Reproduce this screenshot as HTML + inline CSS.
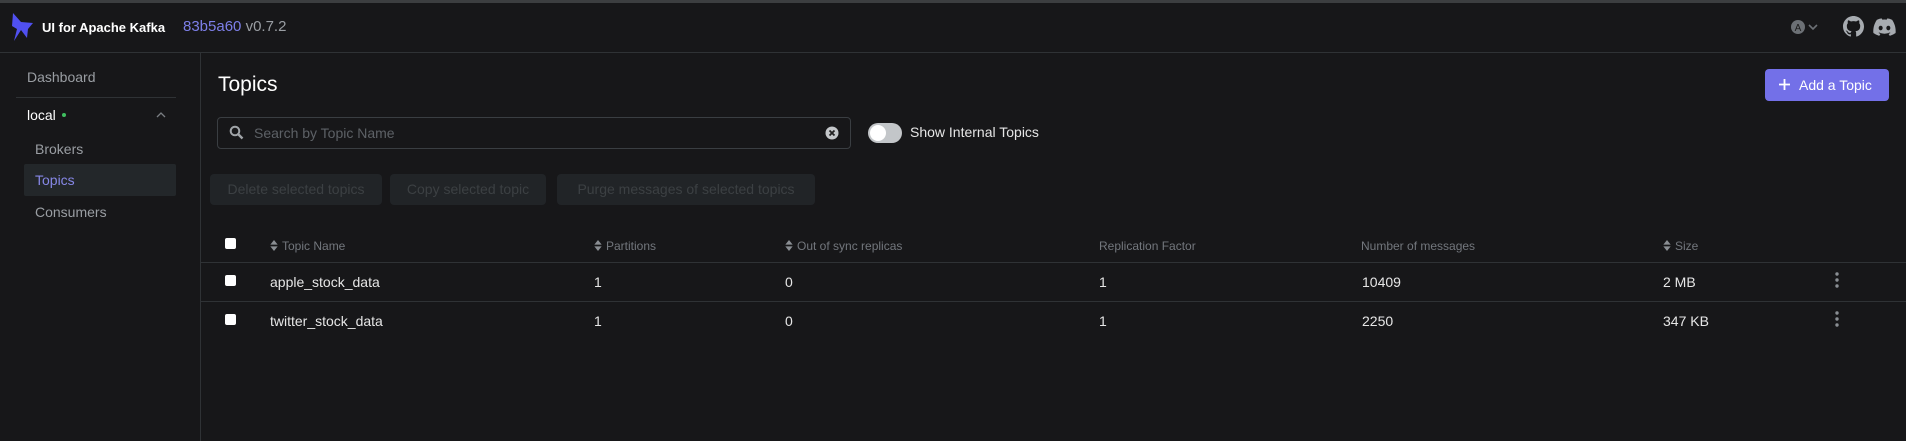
<!DOCTYPE html>
<html><head><meta charset="utf-8"><style>
*{box-sizing:border-box;margin:0;padding:0}
body{width:1906px;height:441px;background:#171719;font-family:"Liberation Sans",sans-serif;color:#e6e6e6;position:relative;overflow:hidden;font-size:14px}
.a{position:absolute;white-space:nowrap}
.g{color:#9a9ea3}
.hd{color:#73777d;font-size:12px}
.cb{position:absolute;width:11px;height:11px;background:#fff;border-radius:2px}
.btn{position:absolute;top:174px;height:31px;background:#212427;border-radius:4px;color:#3c4043;font-size:14px;line-height:31px;text-align:center;white-space:nowrap;overflow:hidden}
.sort{display:inline-block;width:8px;height:11px;vertical-align:-1px;margin-right:4px}
</style></head><body>
<div class="a" style="left:0;top:0;width:1906px;height:3px;background:#3c3e40"></div>
<div class="a" style="left:0;top:52px;width:1906px;height:1px;background:#2f3235"></div>
<div class="a" style="left:200px;top:53px;width:1px;height:388px;background:#2f3235"></div>
<svg class="a" style="left:11px;top:12px" width="24" height="31" viewBox="0 0 24 31"><path d="M2 1 L10 10 L22 11 L17 17 L16 26 L10 18 L3 29 L6 17 L1 14 Z" fill="#5050f0"/></svg>
<div class="a" style="left:42px;top:20px;font-size:13px;font-weight:bold;color:#fff">UI for Apache Kafka</div>
<div class="a" style="left:183px;top:18px;font-size:15px"><span style="color:#7d7fe8">83b5a60</span> <span class="g">v0.7.2</span></div>
<svg class="a" style="left:1790px;top:19px" width="32" height="16"><circle cx="8" cy="8" r="7" fill="#6c7075"/><text x="8" y="12" font-size="10" text-anchor="middle" fill="#1a1a1a" font-family="Liberation Sans">A</text><path d="M19 6 L23 10 L27 6" stroke="#6c7075" stroke-width="1.6" fill="none"/></svg>
<svg class="a" style="left:1843px;top:16px" width="21" height="21" viewBox="0 0 16 16"><path fill="#a7abb0" d="M8 0C3.58 0 0 3.58 0 8c0 3.54 2.29 6.53 5.47 7.590.4.07.55-.17.55-.38v-1.33c-2.23.48-2.7-1.070-2.7-1.070-.36-.92-.89-1.170-.89-1.170-.73-.5.06-.49.06-.49.8.06 1.23.83 1.23.83.72 1.22 1.87.87 2.33.66.07-.52.28-.87.51-1.07-1.78-.2-3.64-.89-3.64-3.95 0-.87.31-1.59.82-2.15-.08-.2-.36-1.02.08-2.12 0 0 .67-.21 2.2.82a7.6 7.6 0 0 1 4 0c1.53-1.04 2.2-.82 2.2-.82.44 1.1.16 1.92.08 2.12.51.56.82 1.27.82 2.15 0 3.07-1.87 3.75-3.65 3.95.29.25.54.73.54 1.48v2.2c0 .21.15.46.55.38A8 8 0 0 0 16 8c0-4.42-3.58-8-8-8z"/></svg>
<svg class="a" style="left:1873px;top:18px" width="23" height="18" viewBox="0 0 24 18"><path fill="#a7abb0" d="M20 1.5A20 20 0 0 0 15 0l-.7 1.3a18 18 0 0 0-4.6 0L9 0a20 20 0 0 0-5 1.5C.9 6.2 0 10.8.4 15.3A20 20 0 0 0 6.5 18.3l1.3-2.1a13 13 0 0 1-2-1l.5-.4a14 14 0 0 0 11.4 0l.5.4a13 13 0 0 1-2 1l1.3 2.1a20 20 0 0 0 6.1-3C24 10 22.7 5.6 20 1.5zM8 12.5c-1.2 0-2.1-1.1-2.1-2.4S6.8 7.7 8 7.7s2.2 1.1 2.1 2.4c0 1.3-.9 2.4-2.1 2.4zm8 0c-1.2 0-2.1-1.1-2.1-2.4s.9-2.4 2.1-2.4 2.2 1.1 2.1 2.4c0 1.3-.9 2.4-2.1 2.4z"/></svg>
<div class="a g" style="left:27px;top:69px;font-size:14px">Dashboard</div>
<div class="a" style="left:16px;top:97px;width:160px;height:1px;background:#2f3235"></div>
<div class="a" style="left:27px;top:107px;font-size:14px;color:#fff">local <span style="display:inline-block;width:4px;height:4px;border-radius:50%;background:#3fbf5f;vertical-align:3px;margin-left:2px"></span></div>
<svg class="a" style="left:156px;top:111px" width="10" height="7"><path d="M1 6 L5 2 L9 6" stroke="#7a7e83" stroke-width="1.3" fill="none"/></svg>
<div class="a g" style="left:35px;top:141px">Brokers</div>
<div class="a" style="left:24px;top:164px;width:152px;height:32px;background:#23272a;border-radius:2px"></div>
<div class="a" style="left:35px;top:172px;color:#8687e6">Topics</div>
<div class="a g" style="left:35px;top:204px">Consumers</div>
<div class="a" style="left:218px;top:73px;font-size:21px;color:#fff">Topics</div>
<div class="a" style="left:1765px;top:69px;width:124px;height:32px;background:#7370e8;border-radius:4px;color:#fff;font-size:14px;line-height:32px;padding-left:34px">Add a Topic</div>
<svg class="a" style="left:1778px;top:78px" width="13" height="13"><path d="M6.5 1v11M1 6.5h11" stroke="#fff" stroke-width="1.8"/></svg>
<div class="a" style="left:217px;top:117px;width:634px;height:32px;border:1px solid #3a3e42;border-radius:4px"></div>
<svg class="a" style="left:229px;top:125px" width="15" height="15"><circle cx="6" cy="6" r="4.3" stroke="#a0a4a8" stroke-width="2" fill="none"/><path d="M9 9 L13.5 13.5" stroke="#a0a4a8" stroke-width="2.4"/></svg>
<div class="a" style="left:254px;top:125px;color:#5d6166;font-size:14px">Search by Topic Name</div>
<svg class="a" style="left:825px;top:126px" width="14" height="14"><circle cx="7" cy="7" r="6.5" fill="#c4c7ca"/><path d="M4.5 4.5l5 5M9.5 4.5l-5 5" stroke="#222" stroke-width="1.8"/></svg>
<div class="a" style="left:868px;top:123px;width:34px;height:20px;border-radius:10px;background:#c3c6c9"></div>
<div class="a" style="left:870px;top:125px;width:16px;height:16px;border-radius:50%;background:#fff"></div>
<div class="a" style="left:910px;top:124px;font-size:14px;color:#e6e6e6">Show Internal Topics</div>
<div class="btn" style="left:210px;width:172px">Delete selected topics</div>
<div class="btn" style="left:390px;width:156px">Copy selected topic</div>
<div class="btn" style="left:557px;width:258px">Purge messages of selected topics</div>
<div class="a" style="left:200px;top:262px;width:1706px;height:1px;background:#2f3235"></div>
<div class="a" style="left:200px;top:301px;width:1706px;height:1px;background:#2f3235"></div>
<div class="cb" style="left:225px;top:238px"></div>
<div class="cb" style="left:225px;top:275px"></div>
<div class="cb" style="left:225px;top:314px"></div>
<svg width="0" height="0" style="position:absolute"><defs><g id="s"><path d="M0 5 L4 0 L8 5Z M0 7 L8 7 L4 12Z" fill="#8a8e93"/></g></defs></svg>
<div class="a hd" style="left:270px;top:239px"><svg class="sort" viewBox="0 0 8 12"><use href="#s"/></svg>Topic Name</div>
<div class="a hd" style="left:594px;top:239px"><svg class="sort" viewBox="0 0 8 12"><use href="#s"/></svg>Partitions</div>
<div class="a hd" style="left:785px;top:239px"><svg class="sort" viewBox="0 0 8 12"><use href="#s"/></svg>Out of sync replicas</div>
<div class="a hd" style="left:1099px;top:239px">Replication Factor</div>
<div class="a hd" style="left:1361px;top:239px">Number of messages</div>
<div class="a hd" style="left:1663px;top:239px"><svg class="sort" viewBox="0 0 8 12"><use href="#s"/></svg>Size</div>
<div class="a" style="left:270px;top:274px">apple_stock_data</div>
<div class="a" style="left:594px;top:274px">1</div>
<div class="a" style="left:785px;top:274px">0</div>
<div class="a" style="left:1099px;top:274px">1</div>
<div class="a" style="left:1362px;top:274px">10409</div>
<div class="a" style="left:1663px;top:274px">2 MB</div>
<div class="a" style="left:270px;top:313px">twitter_stock_data</div>
<div class="a" style="left:594px;top:313px">1</div>
<div class="a" style="left:785px;top:313px">0</div>
<div class="a" style="left:1099px;top:313px">1</div>
<div class="a" style="left:1362px;top:313px">2250</div>
<div class="a" style="left:1663px;top:313px">347 KB</div>
<svg class="a" style="left:1834px;top:272px" width="6" height="16"><circle cx="3" cy="2" r="1.7" fill="#8a8e93"/><circle cx="3" cy="8" r="1.7" fill="#8a8e93"/><circle cx="3" cy="14" r="1.7" fill="#8a8e93"/></svg>
<svg class="a" style="left:1834px;top:311px" width="6" height="16"><circle cx="3" cy="2" r="1.7" fill="#8a8e93"/><circle cx="3" cy="8" r="1.7" fill="#8a8e93"/><circle cx="3" cy="14" r="1.7" fill="#8a8e93"/></svg>
</body></html>
